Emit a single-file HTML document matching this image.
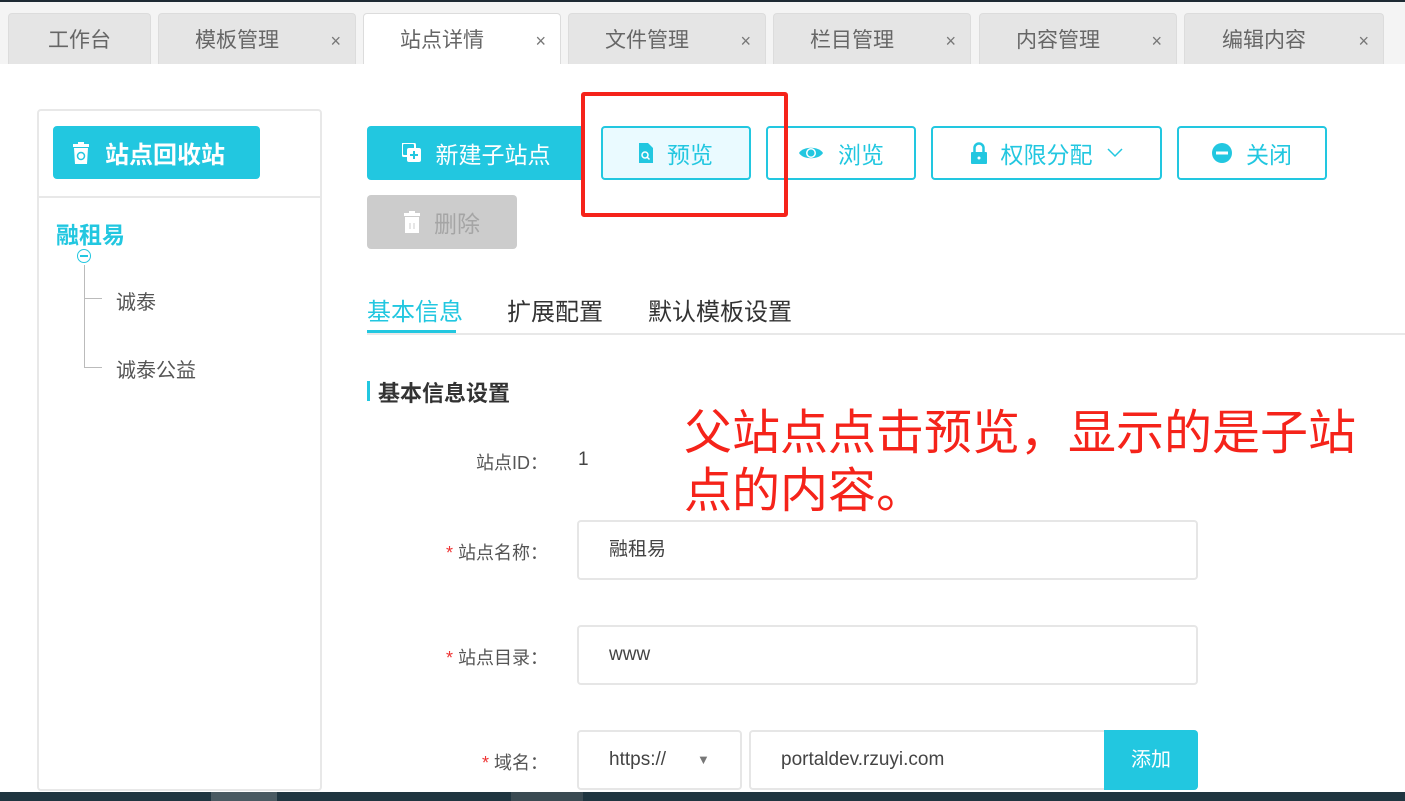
<!DOCTYPE html>
<html><head><meta charset="utf-8"><style>
*{box-sizing:border-box;margin:0;padding:0}
body{width:1405px;height:801px;overflow:hidden;background:#fff;font-family:"Liberation Sans","Noto Sans CJK SC",sans-serif;position:relative;color:#333}
.a{position:absolute}
.topbar{left:0;top:0;width:1405px;height:64px;background:#f4f4f4;border-top:2px solid #1e2a33}
.tab{position:absolute;top:13px;height:51px;background:#e5e5e5;border:1px solid #dcdcdc;border-bottom:none;border-radius:4px 4px 0 0;font-size:21px;color:#666;line-height:54px}
.tab .t{position:absolute;left:0;right:40px;text-align:center}
.tab .x{position:absolute;right:14px;top:0;font-size:18px;color:#777}
.btn{position:absolute;height:54px;border:2px solid #22c7e0;border-radius:4px;color:#22c7e0;font-size:23px;display:flex;align-items:center;justify-content:center;gap:14px;background:#fff}
.lbl{position:absolute;font-size:18px;color:#555;text-align:right;width:200px}
.inp{position:absolute;border:2px solid #e6e6e6;border-radius:4px;height:60px;font-size:19px;color:#444;line-height:56px;padding-left:30px}
.r{color:#e33}
</style></head><body>
<div class="a topbar"></div>
<div class="tab" style="left:8px;width:143px"><div class="t" style="right:0">工作台</div></div>
<div class="tab" style="left:158px;width:198px"><div class="t">模板管理</div><div class="x">×</div></div>
<div class="tab" style="left:363px;width:198px;background:#fff"><div class="t">站点详情</div><div class="x">×</div></div>
<div class="tab" style="left:568px;width:198px"><div class="t">文件管理</div><div class="x">×</div></div>
<div class="tab" style="left:773px;width:198px"><div class="t">栏目管理</div><div class="x">×</div></div>
<div class="tab" style="left:979px;width:198px"><div class="t">内容管理</div><div class="x">×</div></div>
<div class="tab" style="left:1184px;width:200px"><div class="t">编辑内容</div><div class="x">×</div></div>

<div class="a" style="left:37px;top:109px;width:285px;height:682px;border:2px solid #e8e8e8;border-radius:4px"></div>
<div class="a" style="left:39px;top:196px;width:281px;height:2px;background:#e8e8e8"></div>
<div class="a" style="left:53px;top:126px;width:207px;height:53px;background:#22c7e0;border-radius:4px;color:#fff;font-size:24px;font-weight:bold;display:flex;align-items:center;gap:16px;padding-left:20px">
<svg width="16" height="22" viewBox="0 0 16 22"><rect x="0" y="2" width="16" height="3" fill="#fff"/><rect x="5" y="0" width="6" height="3" fill="#fff"/><path d="M1 6h14l-1 16H2z" fill="#fff"/><circle cx="8" cy="14" r="3.5" fill="none" stroke="#22c7e0" stroke-width="1.5"/></svg>站点回收站</div>
<div class="a" style="left:56px;top:216px;font-size:23px;font-weight:bold;color:#22c7e0">融租易</div>
<div class="a" style="left:77px;top:249px;width:14px;height:14px;border:1.5px solid #22c7e0;border-radius:50%"></div>
<div class="a" style="left:80px;top:255px;width:8px;height:1.5px;background:#22c7e0"></div>
<div class="a" style="left:84px;top:265px;width:1px;height:103px;background:#bbb"></div>
<div class="a" style="left:84px;top:298px;width:18px;height:1px;background:#bbb"></div>
<div class="a" style="left:84px;top:367px;width:18px;height:1px;background:#bbb"></div>
<div class="a" style="left:116px;top:286px;font-size:20px;color:#555">诚泰</div>
<div class="a" style="left:116px;top:354px;font-size:20px;color:#555">诚泰公益</div>

<div class="btn" style="left:367px;top:126px;width:218px;background:#22c7e0;color:#fff;border:none">
<svg width="20" height="20" viewBox="0 0 20 20"><rect x="0" y="0" width="13" height="13" rx="2" fill="none" stroke="#fff" stroke-width="2"/><rect x="5" y="5" width="14" height="14" rx="2" fill="#fff"/><path d="M12 8v8M8 12h8" stroke="#22c7e0" stroke-width="2"/></svg>新建子站点</div>
<div class="btn" style="left:601px;top:126px;width:150px;background:#eafaff">
<svg width="14" height="20" viewBox="0 0 14 20"><path d="M0 0h9l5 5v15H0z" fill="#22c7e0"/><circle cx="6" cy="12" r="3" fill="none" stroke="#fff" stroke-width="1.5"/><path d="M8 14l2.5 2.5" stroke="#fff" stroke-width="1.5"/></svg>预览</div>
<div class="btn" style="left:766px;top:126px;width:150px">
<svg width="26" height="18" viewBox="0 0 26 18"><path d="M1 9C5 2 21 2 25 9C21 16 5 16 1 9z" fill="#22c7e0"/><circle cx="13" cy="9" r="5" fill="#fff"/><circle cx="13" cy="9" r="3.5" fill="#22c7e0"/></svg>浏览</div>
<div class="btn" style="left:931px;top:126px;width:231px">
<svg width="16" height="22" viewBox="0 0 16 22"><path d="M3.5 10V6a4.5 4.5 0 0 1 9 0v4" fill="none" stroke="#22c7e0" stroke-width="2.5"/><rect x="0" y="10" width="16" height="12" rx="1" fill="#22c7e0"/><circle cx="8" cy="16" r="1.5" fill="#fff"/></svg>权限分配<svg width="16" height="10" viewBox="0 0 16 10"><path d="M1 1l7 7 7-7" fill="none" stroke="#22c7e0" stroke-width="1.5"/></svg></div>
<div class="btn" style="left:1177px;top:126px;width:150px">
<svg width="20" height="20" viewBox="0 0 20 20"><circle cx="10" cy="10" r="10" fill="#22c7e0"/><rect x="4" y="8.5" width="12" height="3" fill="#fff"/></svg>关闭</div>
<div class="btn" style="left:367px;top:195px;width:150px;background:#ccc;border:none;color:#a5a5a5">
<svg width="16" height="22" viewBox="0 0 16 22"><rect x="0" y="2" width="16" height="3" fill="#fff"/><rect x="5" y="0" width="6" height="3" fill="#fff"/><path d="M1 6h14v16H1z" fill="#fff"/><path d="M6 12v6M10 12v6" stroke="#ccc" stroke-width="1"/></svg>删除</div>

<div class="a" style="left:581px;top:92px;width:207px;height:125px;border:4px solid #f5231a;border-radius:3px"></div>

<div class="a" style="left:367px;top:292px;font-size:24px;color:#22c7e0">基本信息</div>
<div class="a" style="left:367px;top:330px;width:89px;height:4px;background:#22c7e0"></div>
<div class="a" style="left:507px;top:292px;font-size:24px;color:#333">扩展配置</div>
<div class="a" style="left:648px;top:292px;font-size:24px;color:#333">默认模板设置</div>
<div class="a" style="left:367px;top:333px;width:1038px;height:2px;background:#e8e8e8"></div>

<div class="a" style="left:367px;top:381px;width:3px;height:20px;background:#22c7e0"></div>
<div class="a" style="left:378px;top:376px;font-size:22px;font-weight:bold;color:#333">基本信息设置</div>

<div class="a" style="left:684px;top:405px;font-size:48px;line-height:58px;color:#f5231a;width:720px;white-space:nowrap">父站点点击预览，显示的是子站<br>点的内容。</div>

<div class="lbl" style="left:348px;top:449px">站点ID：</div>
<div class="a" style="left:578px;top:449px;font-size:19px;color:#444">1</div>
<div class="lbl" style="left:348px;top:539px"><span class="r">* </span>站点名称：</div>
<div class="inp" style="left:577px;top:520px;width:621px">融租易</div>
<div class="lbl" style="left:348px;top:644px"><span class="r">* </span>站点目录：</div>
<div class="inp" style="left:577px;top:625px;width:621px">www</div>
<div class="lbl" style="left:348px;top:749px"><span class="r">* </span>域名：</div>
<div class="inp" style="left:577px;top:730px;width:165px">https://<span style="position:absolute;left:118px;top:0;font-size:13px;color:#777">▼</span></div>
<div class="inp" style="left:749px;top:730px;width:449px">portaldev.rzuyi.com</div>
<div class="a" style="left:1104px;top:730px;width:94px;height:60px;background:#22c7e0;color:#fff;font-size:20px;line-height:60px;text-align:center;border-radius:0 4px 4px 0">添加</div>

<div class="a" style="left:0;top:792px;width:1405px;height:9px;background:#1f3540"></div>
<div class="a" style="left:211px;top:792px;width:66px;height:9px;background:#4a5a62"></div>
<div class="a" style="left:511px;top:792px;width:72px;height:9px;background:#3a4a52"></div>
</body></html>
